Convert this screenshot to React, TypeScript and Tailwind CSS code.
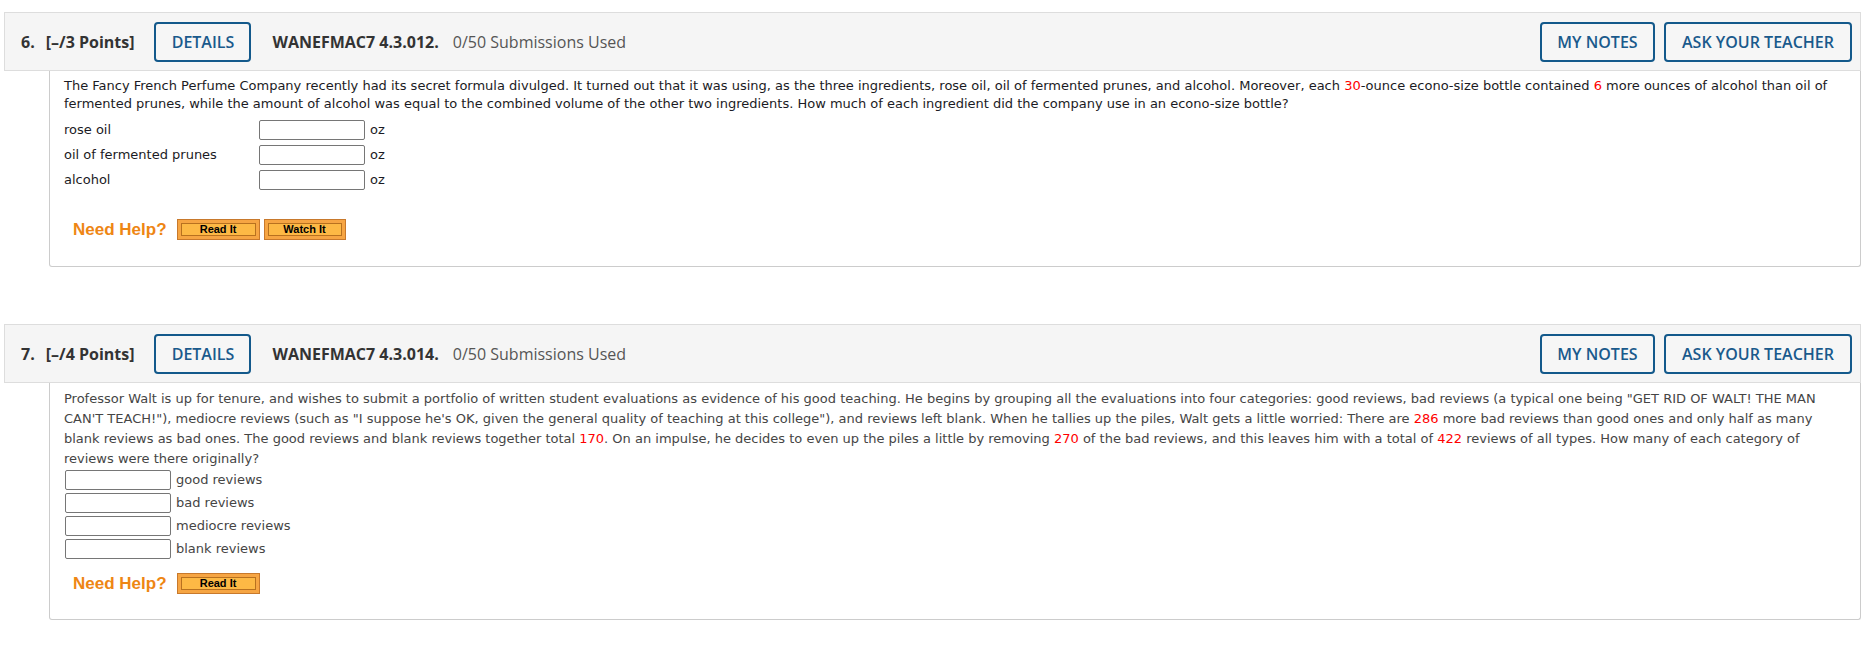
import React from "react";

const headerFont = { fontFamily: '"Open Sans", "Noto Sans", Arial, sans-serif' };
const bodyFont = { fontFamily: '"DejaVu Sans", Verdana, sans-serif' };
const helpFont = { fontFamily: '"Liberation Sans", Arial, sans-serif' };

function OutlineButton({ label, w }: { label: string; w: string }) {
  return (
    <button
      className={`${w} h-[40px] border-2 border-[#13598b] rounded-[4px] text-[#1a5a8c] text-[16px] font-semibold flex items-center justify-center bg-[#f6f6f6]`}
      style={headerFont}
    >
      {label}
    </button>
  );
}

function Header({ num, points, code }: { num: string; points: string; code: string }) {
  return (
    <div
      className="flex items-center h-[59px] border border-[#dddddd] bg-[#f5f5f5] pl-[16px] pr-[8px] text-[16px]"
      style={headerFont}
    >
      <span className="font-bold text-[#333333]">{num}</span>
      <span className="font-bold text-[#333333] ml-[11px]">{points}</span>
      <div className="ml-[20px]">
        <OutlineButton label="DETAILS" w="w-[97px]" />
      </div>
      <span className="font-bold text-[#333333] ml-[21px]">{code}</span>
      <span className="text-[#555555] ml-[14px]">0/50 Submissions Used</span>
      <div className="ml-auto flex gap-[9px]">
        <OutlineButton label="MY NOTES" w="w-[115px]" />
        <OutlineButton label="ASK YOUR TEACHER" w="w-[188px]" />
      </div>
    </div>
  );
}

function HelpButton({ label, w }: { label: string; w: string }) {
  return (
    <div className={`${w} h-[21px] border border-[#c8792c] bg-[#f6a543] p-[3px] flex`}>
      <div
        className="flex-1 border border-[#b8711f] bg-[#fdb945] flex items-center justify-center text-[11px] font-bold text-black leading-none"
        style={helpFont}
      >
        {label}
      </div>
    </div>
  );
}

function NeedHelp({ watch }: { watch?: boolean }) {
  return (
    <div className="flex items-center pl-[9px]">
      <span className="text-[17px] font-bold text-[#ee8614] leading-none" style={helpFont}>
        Need Help?
      </span>
      <div className="ml-[10px] flex gap-[4px]">
        <HelpButton label="Read It" w="w-[83px]" />
        {watch && <HelpButton label="Watch It" w="w-[82px]" />}
      </div>
    </div>
  );
}

const Red = ({ children }: { children: React.ReactNode }) => (
  <span className="text-[#ff0000]">{children}</span>
);

function Input() {
  return <input type="text" className="w-[106px] h-[20px] border border-[#767676] rounded-[2px] bg-white" />;
}

function Card1() {
  const rows = ["rose oil", "oil of fermented prunes", "alcohol"];
  return (
    <div>
      <Header num="6." points="[–/3 Points]" code="WANEFMAC7 4.3.012." />
      <div
        className="ml-[45px] border border-t-0 border-[#cccccc] rounded-b-[3px] pl-[14px] pr-[15px] pt-[6px] pb-[26px] text-[13px] text-[#1b1b24]"
        style={bodyFont}
      >
        <p className="leading-[18px]">
          The Fancy French Perfume Company recently had its secret formula divulged. It turned out that it was using, as
          the three ingredients, rose oil, oil of fermented prunes, and alcohol. Moreover, each <Red>30</Red>-ounce
          econo-size bottle contained <Red>6</Red> more ounces of alcohol than oil of fermented prunes, while the amount
          of alcohol was equal to the combined volume of the other two ingredients. How much of each ingredient did the
          company use in an econo-size bottle?
        </p>
        <div className="mt-[7px] flex flex-col gap-[5px]">
          {rows.map((r) => (
            <div key={r} className="flex items-center h-[20px]">
              <span className="w-[195px]">{r}</span>
              <Input />
              <span className="ml-[5px]">oz</span>
            </div>
          ))}
        </div>
        <div className="mt-[29px]">
          <NeedHelp watch />
        </div>
      </div>
    </div>
  );
}

function Card2() {
  const rows = ["good reviews", "bad reviews", "mediocre reviews", "blank reviews"];
  return (
    <div>
      <Header num="7." points="[–/4 Points]" code="WANEFMAC7 4.3.014." />
      <div
        className="ml-[45px] border border-t-0 border-[#cccccc] rounded-b-[3px] pl-[14px] pr-[15px] pt-[6px] pb-[25px] text-[13px] text-[#454545]"
        style={bodyFont}
      >
        <p className="leading-[20px]">
          Professor Walt is up for tenure, and wishes to submit a portfolio of written student evaluations as evidence of
          his good teaching. He begins by grouping all the evaluations into four categories: good reviews, bad reviews (a
          typical one being "GET RID OF WALT! THE MAN CAN'T TEACH!"), mediocre reviews (such as "I suppose he's OK, given
          the general quality of teaching at this college"), and reviews left blank. When he tallies up the piles, Walt
          gets a little worried: There are <Red>286</Red> more bad reviews than good ones and only half as many blank
          reviews as bad ones. The good reviews and blank reviews together total <Red>170</Red>. On an impulse, he decides
          to even up the piles a little by removing <Red>270</Red> of the bad reviews, and this leaves him with a total of{" "}
          <Red>422</Red> reviews of all types. How many of each category of reviews were there originally?
        </p>
        <div className="mt-[1px] pl-[1px] flex flex-col gap-[3px]">
          {rows.map((r) => (
            <div key={r} className="flex items-center h-[20px]">
              <Input />
              <span className="ml-[5px]">{r}</span>
            </div>
          ))}
        </div>
        <div className="mt-[14px]">
          <NeedHelp />
        </div>
      </div>
    </div>
  );
}

export default function App() {
  return (
    <div className="bg-white min-h-[646px] pl-[4px] pr-[6px] pt-[12px]">
      <Card1 />
      <div className="h-[57px]" />
      <Card2 />
    </div>
  );
}
